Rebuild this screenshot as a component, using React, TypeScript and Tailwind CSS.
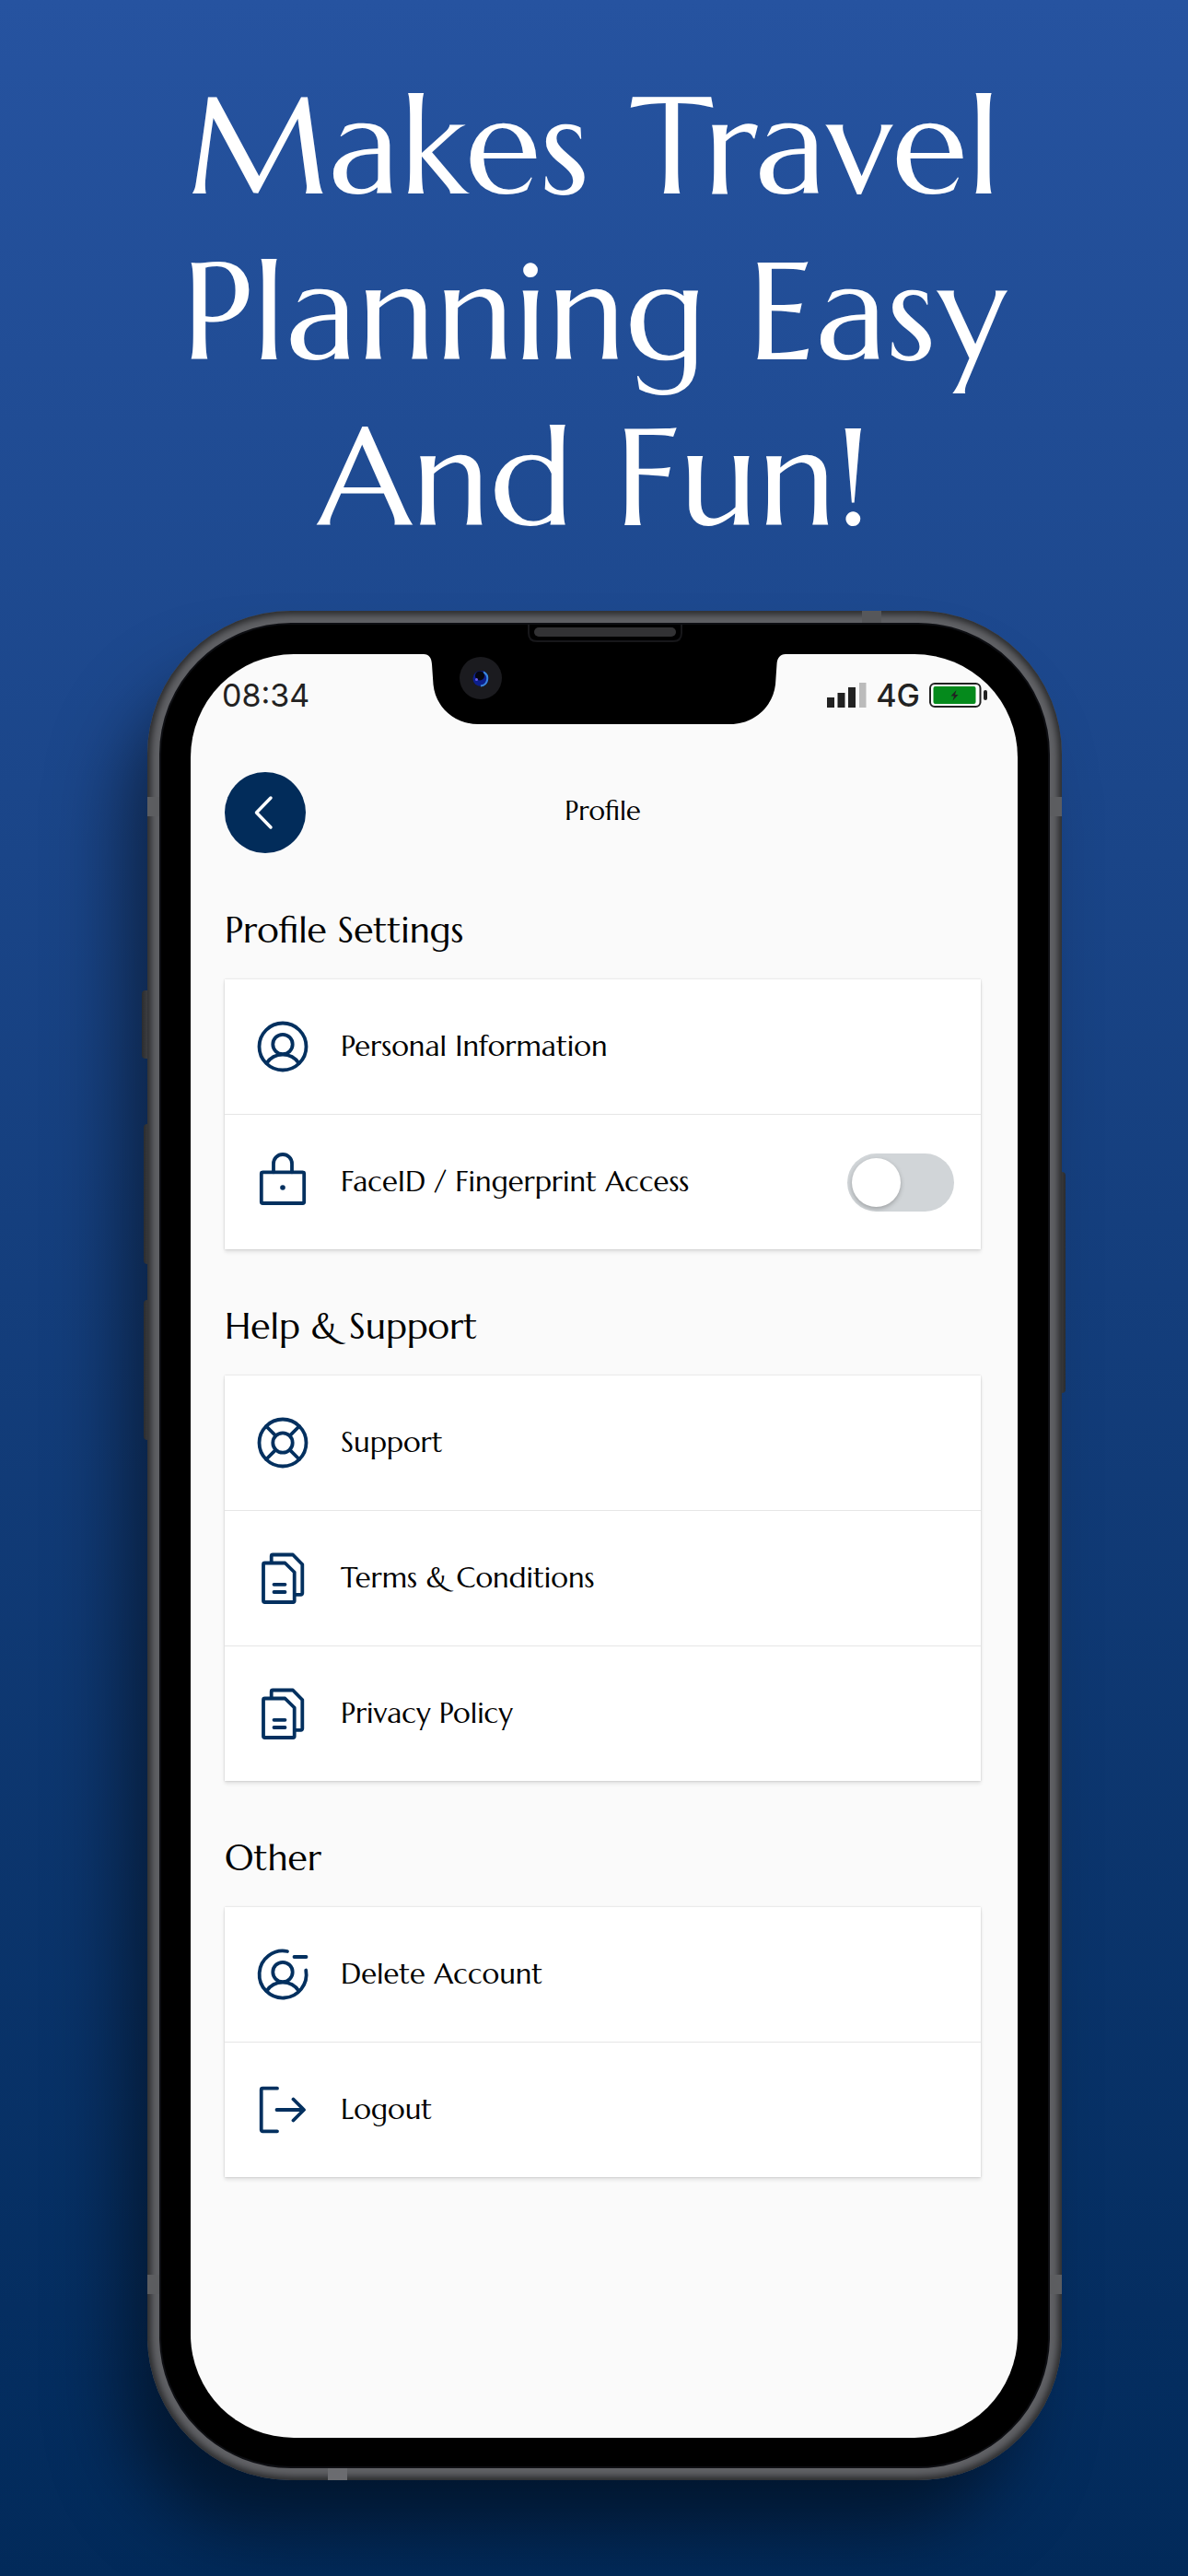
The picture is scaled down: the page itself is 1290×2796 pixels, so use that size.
import { useState, type ReactNode } from "react";

type IconName = "user" | "lock" | "support" | "document" | "userMinus" | "logout";

type Row = { icon: IconName; label: string; toggle?: boolean };

const SECTIONS: { title: string; rows: Row[] }[] = [
  {
    title: "Profile Settings",
    rows: [
      { icon: "user", label: "Personal Information" },
      { icon: "lock", label: "FaceID / Fingerprint Access", toggle: true },
    ],
  },
  {
    title: "Help & Support",
    rows: [
      { icon: "support", label: "Support" },
      { icon: "document", label: "Terms & Conditions" },
      { icon: "document", label: "Privacy Policy" },
    ],
  },
  {
    title: "Other",
    rows: [
      { icon: "userMinus", label: "Delete Account" },
      { icon: "logout", label: "Logout" },
    ],
  },
];

const ICONS: Record<IconName, ReactNode> = {
  user: (
    <>
      <circle cx="32" cy="32" r="25.5" />
      <circle cx="32" cy="29.5" r="10.7" />
      <path d="M14.5 50a21 21 0 0 1 35 0" />
    </>
  ),
  lock: (
    <>
      <rect x="8.8" y="21.3" width="46.4" height="33.7" rx="1.5" />
      <path d="M22 21.3V12a10 10 0 0 1 20 0v9.3" />
      <circle cx="32" cy="38" r="2.8" fill="currentColor" stroke="none" />
    </>
  ),
  support: (
    <>
      <circle cx="32" cy="32" r="25.5" />
      <circle cx="32" cy="32" r="10.7" />
      <path d="M14 14l10.4 10.4M50 14L39.6 24.4M14 50l10.4-10.4M50 50L39.6 39.6" />
    </>
  ),
  document: (
    <>
      <path d="M12.5 15.5H34.5L44.7 25.5V56.5a1.5 1.5 0 0 1-1.5 1.5H12.5a1.5 1.5 0 0 1-1.5-1.5V17a1.5 1.5 0 0 1 1.5-1.5z" />
      <path d="M19.7 15V8a1.5 1.5 0 0 1 1.5-1.5H43L53.3 17V48.3a1.5 1.5 0 0 1-1.5 1.5H46" />
      <path d="M22.5 38.8H34.5M22.5 47H34.5" />
    </>
  ),
  userMinus: (
    <>
      <path d="M37 7A25.5 25.5 0 1 0 57.2 27.5" />
      <circle cx="32" cy="29.5" r="10.7" />
      <path d="M14.5 50a21 21 0 0 1 35 0M44.5 13H57.5" />
    </>
  ),
  logout: (
    <>
      <path d="M26 8.7H10.2a1.5 1.5 0 0 0-1.5 1.5V53.8a1.5 1.5 0 0 0 1.5 1.5H26" />
      <path d="M25.5 32H54.5M43.5 20.5L55 32L43.5 43.5" />
    </>
  ),
};

function RowIcon({ name }: { name: IconName }) {
  return (
    <svg
      viewBox="0 0 64 64"
      className="size-16 shrink-0 text-[#03305f]"
      fill="none"
      stroke="currentColor"
      strokeWidth="3.8"
      strokeLinecap="round"
      strokeLinejoin="round"
      aria-hidden
    >
      {ICONS[name]}
    </svg>
  );
}

function Switch({ id }: { id: string }) {
  const [on, setOn] = useState(false);
  return (
    <input
      id={id}
      type="checkbox"
      role="switch"
      checked={on}
      onChange={(e) => setOn(e.target.checked)}
      className="flex h-[63px] w-[116px] shrink-0 cursor-pointer appearance-none items-center rounded-full bg-[#d1d5d8] px-[5px] before:size-[53px] before:rounded-full before:bg-white before:shadow-[0_2px_5px_rgba(0,0,0,0.25)] checked:justify-end checked:bg-[#022c5a]"
    />
  );
}

function SettingsRow({ row }: { row: Row }) {
  const rowClass = "flex h-[146px] w-full items-center gap-[31px] pl-[31px] pr-[29px] text-left text-[31px]";
  if (row.toggle) {
    return (
      <div className={rowClass}>
        <RowIcon name={row.icon} />
        <label htmlFor="biometric-access" className="flex-1">
          {row.label}
        </label>
        <Switch id="biometric-access" />
      </div>
    );
  }
  return (
    <button type="button" className={rowClass}>
      <RowIcon name={row.icon} />
      <span>{row.label}</span>
    </button>
  );
}

function StatusBar() {
  return (
    <div className="flex h-16 items-center justify-between pl-[34px] pr-8 pt-6 font-['Inter',sans-serif] text-[34px] text-[#222]">
      <span>08:34</span>
      <div className="flex items-center gap-2.5">
        <svg viewBox="0 0 43 27" className="h-[27px] w-[43px]" aria-hidden>
          <path d="M0 16h8v11H0zM11.5 11h8v16h-8zM23 5h8v22h-8z" fill="#222" />
          <path d="M35 0h7.5v27H35z" fill="#bbb" />
        </svg>
        <span className="font-medium">4G</span>
        <svg viewBox="0 0 64 27" className="h-[27px] w-16" aria-hidden>
          <rect x="1" y="1" width="54.5" height="25" rx="5" fill="#fff" stroke="#222" strokeWidth="2" />
          <rect x="4.5" y="4" width="46" height="19" rx="2" fill="#058a1c" />
          <path d="M29.5 8l-6 6.5h3.5l-1.5 5 6-6.5H28z" fill="#222" />
          <rect x="59" y="8" width="4" height="11" rx="2" fill="#222" />
        </svg>
      </div>
    </div>
  );
}

function Notch() {
  return (
    <svg
      viewBox="0 0 394 112"
      className="pointer-events-none absolute left-1/2 top-0 h-[112px] w-[394px] -translate-x-1/2"
      aria-hidden
    >
      {/* speaker */}
      <path d="M114 0V9Q114 18 123 18H271Q280 18 280 9V0" fill="none" stroke="#17171a" strokeWidth="2" />
      <rect x="120" y="3" width="154" height="10" rx="5" fill="#323234" />
      {/* cut-out */}
      <path
        d="M0 30V32C6 32 8.5 36 9 43L10.5 65C13 90 34 108 59 108H333C358 108 379 90 382 65L383.5 43C384 36 387 32 393 32V30z"
        fill="#000"
      />
      {/* camera */}
      <circle cx="62" cy="58" r="23" fill="#1b1b1f" />
      <circle cx="62" cy="58.5" r="8.5" fill="#0c1f8c" />
      <path d="M65 51.5a8 8 0 0 1-3 15" fill="none" stroke="#3a86dc" strokeWidth="2" />
      <circle cx="61" cy="55.5" r="5" fill="#05060f" />
      <circle cx="57.5" cy="59.5" r="1.5" fill="#6a5cf0" />
    </svg>
  );
}

function PhoneFrame({ children }: { children: ReactNode }) {
  return (
    <div className="relative mb-[104px] ml-40 mr-[137px] flex flex-1 flex-col rounded-[156px] shadow-[-36px_64px_80px_-12px_rgba(0,0,0,0.5)]">
      {/* side buttons */}
      <div className="absolute -left-1.5 top-[412px] h-[74px] w-3 rounded-l bg-linear-to-r from-[#2b2c2e] to-[#4f5053]" />
      <div className="absolute -left-1 top-[557px] h-[152px] w-3 rounded-l bg-linear-to-r from-[#2b2c2e] to-[#4f5053]" />
      <div className="absolute -left-1 top-[748px] h-[152px] w-3 rounded-l bg-linear-to-r from-[#2b2c2e] to-[#4f5053]" />
      <div className="absolute -right-1 top-[609px] h-[240px] w-3 rounded-r bg-linear-to-l from-[#2b2c2e] to-[#4f5053]" />

      <div className="relative flex flex-1 flex-col rounded-[156px] bg-[#606165] p-[13px] shadow-[inset_0_0_7px_4px_#2a2b2d]">
        {/* antenna lines */}
        <div className="absolute left-0 top-[202px] h-[21px] w-full bg-[#5c5d60]" />
        <div className="absolute bottom-[202px] left-0 h-[21px] w-full bg-[#5c5d60]" />
        <div className="absolute right-[196px] top-0 h-[13px] w-[21px] bg-[#56575a]" />
        <div className="absolute bottom-0 left-[196px] h-[13px] w-[21px] bg-[#6b6c70]" />

        <div className="relative flex flex-1 flex-col rounded-[143px] border-2 border-[#0d0e12] bg-black pb-[31px] pl-8 pr-[33px] pt-8">
          <div className="flex flex-1 flex-col overflow-hidden rounded-[112px] bg-[#fafafa]">{children}</div>
          <Notch />
        </div>
      </div>
    </div>
  );
}

export default function App() {
  return (
    <main className="flex min-h-screen flex-col bg-linear-to-b from-[#2653a0] to-[#022a5a] font-['Marcellus','Lato',sans-serif] text-black">
      <h1 className="pb-[55px] pt-[68px] text-center text-[150px] leading-[180px] text-white">
        Makes Travel
        <br />
        Planning Easy
        <br />
        And Fun!
      </h1>

      <PhoneFrame>
        <StatusBar />
        <div className="pl-[37px] pr-10">
          <header className="grid grid-cols-[88px_1fr_88px] items-center pt-16">
            <button
              type="button"
              aria-label="Back"
              className="flex size-[88px] items-center justify-center rounded-full bg-[#022c5a] text-white"
            >
              <svg
                viewBox="0 0 40 40"
                className="size-10"
                fill="none"
                stroke="currentColor"
                strokeWidth="3.5"
                strokeLinecap="round"
                strokeLinejoin="round"
                aria-hidden
              >
                <path d="M26 4L10.5 20L26 36" />
              </svg>
            </button>
            <h2 className="pb-0.5 text-center text-[29px]">Profile</h2>
          </header>

          {SECTIONS.map((section) => (
            <section key={section.title} className="pt-[58px]">
              <h3 className="h-[79px] text-[39px] leading-[52px]">{section.title}</h3>
              <ul className="divide-y divide-[#e6e6e6] bg-white shadow-[0_0_2px_rgba(0,0,0,0.18),0_3px_4px_rgba(0,0,0,0.1)]">
                {section.rows.map((row) => (
                  <li key={row.label}>
                    <SettingsRow row={row} />
                  </li>
                ))}
              </ul>
            </section>
          ))}
        </div>
      </PhoneFrame>
    </main>
  );
}
